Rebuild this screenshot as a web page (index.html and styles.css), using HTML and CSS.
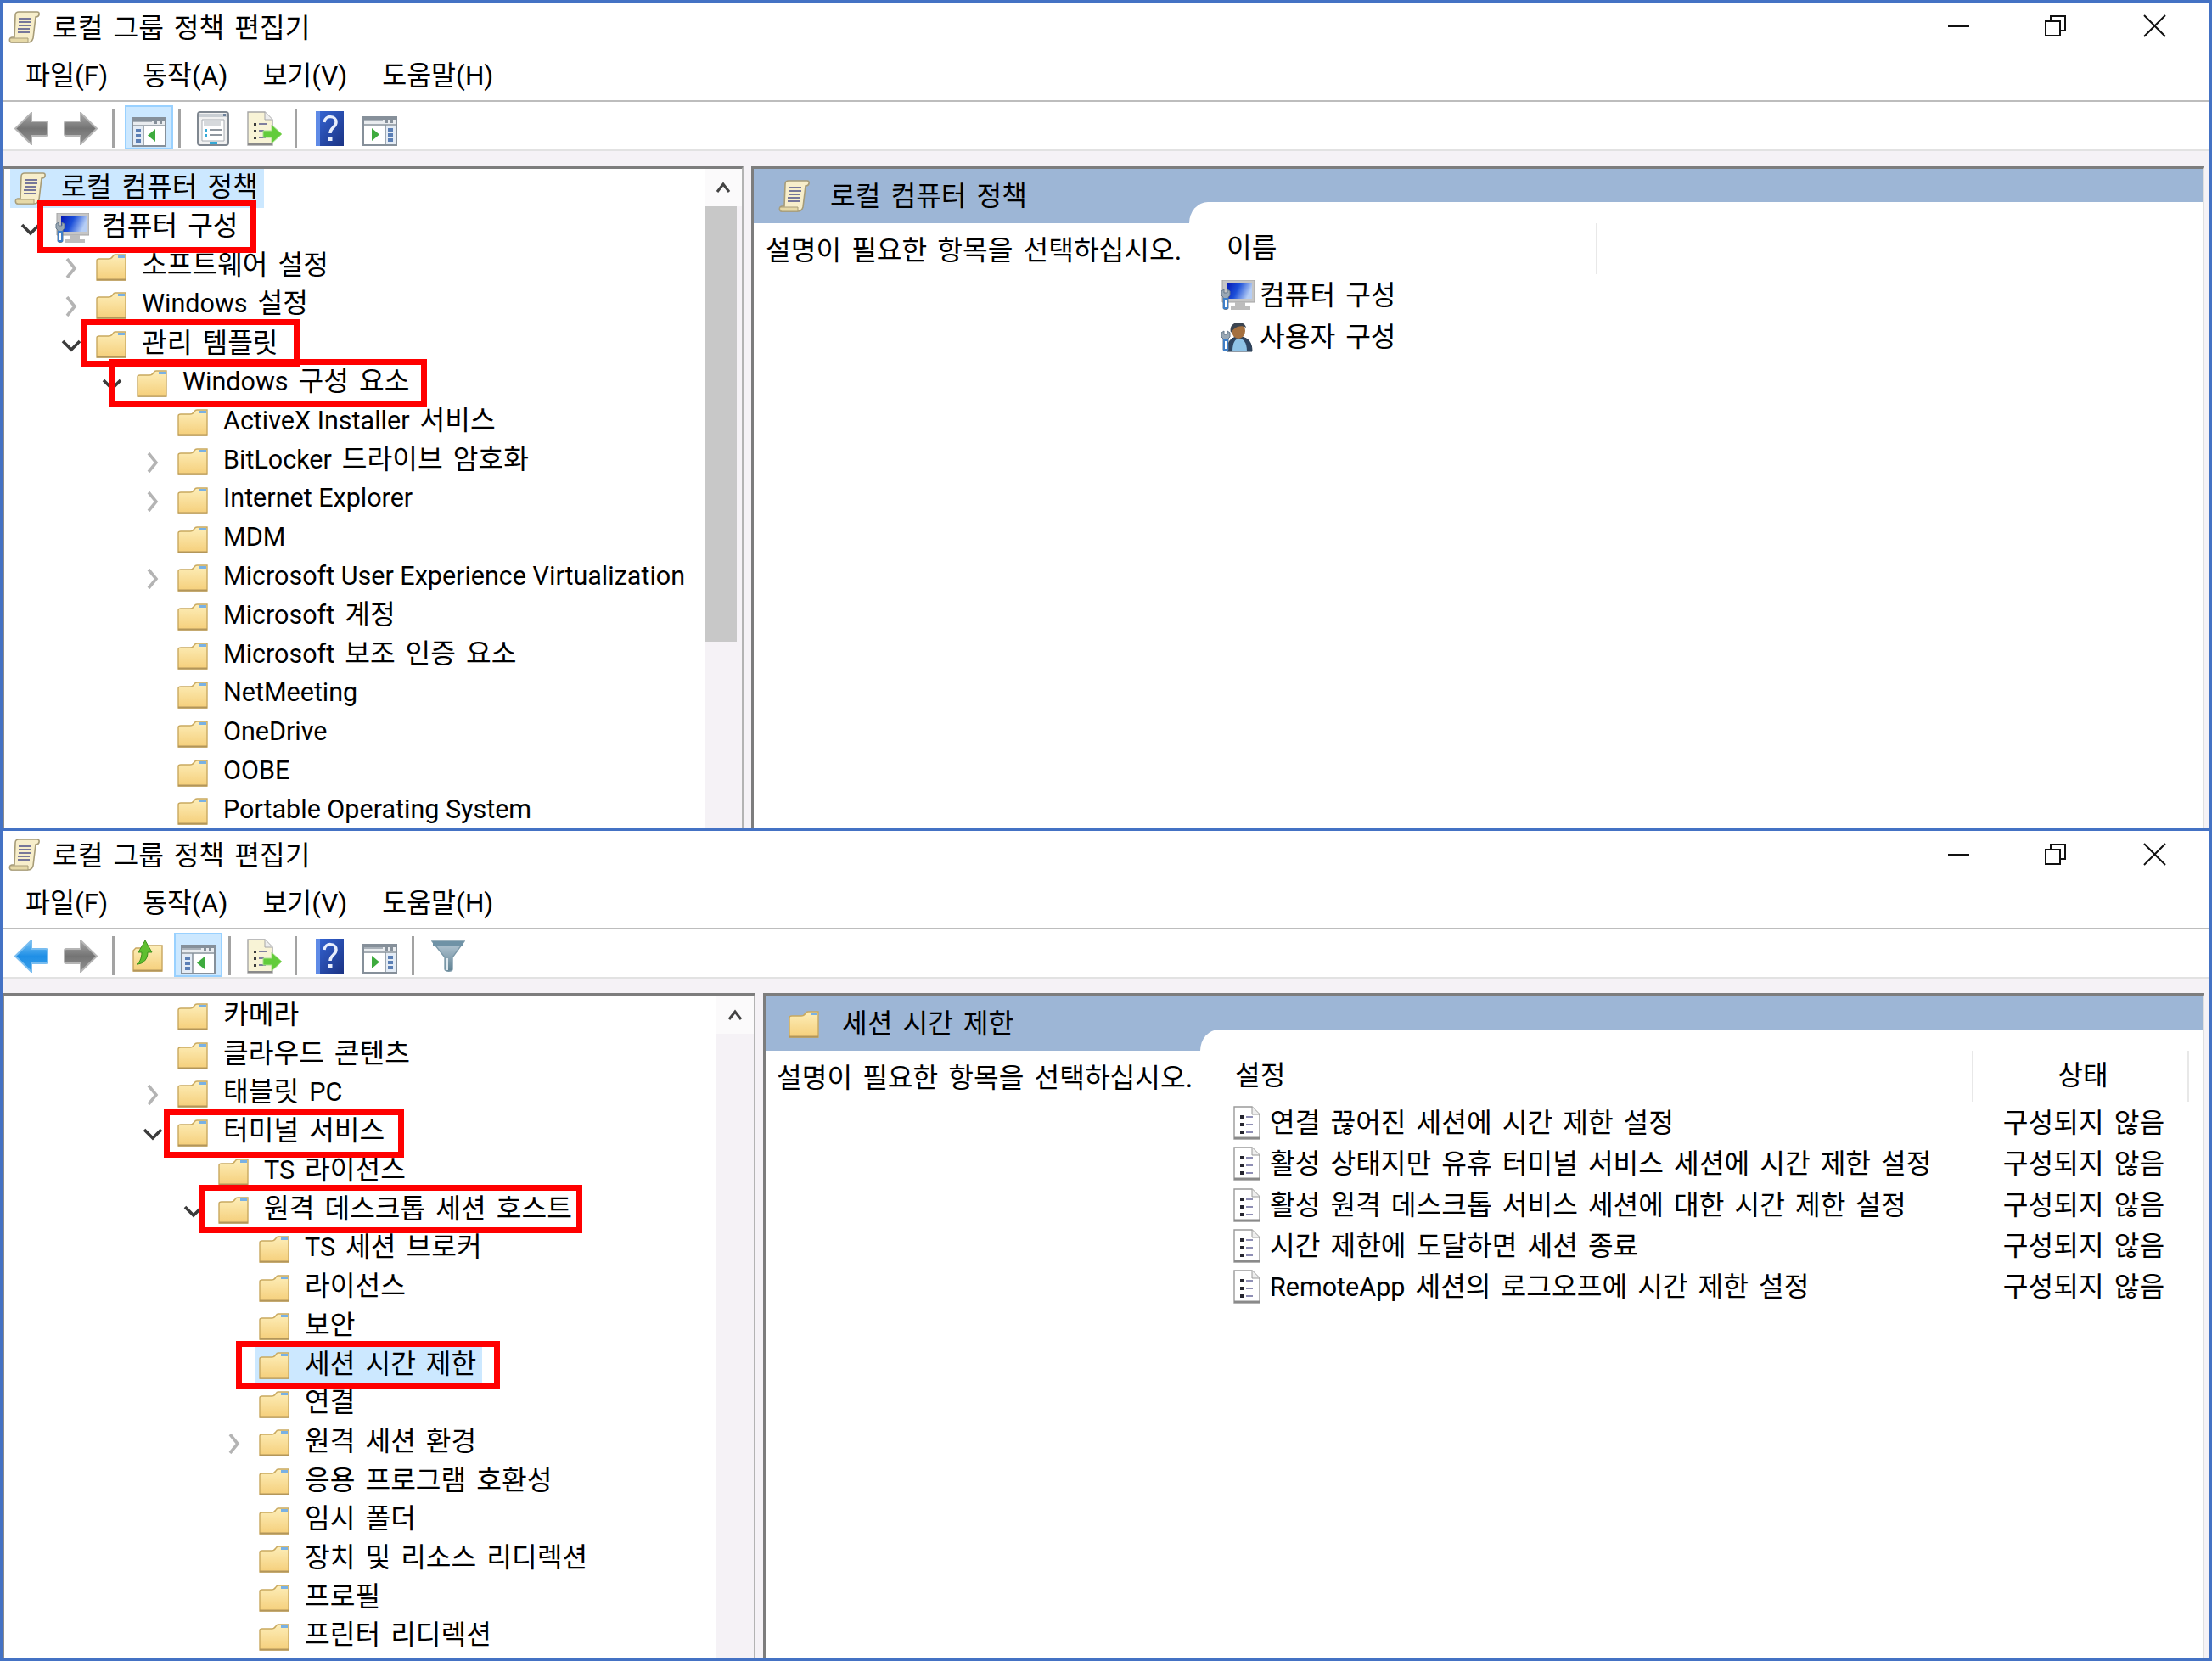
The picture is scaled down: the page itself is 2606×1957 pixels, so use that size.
FILE: index.html
```html
<!DOCTYPE html>
<html lang="ko">
<head><meta charset="utf-8"><title>로컬 그룹 정책 편집기</title><link rel="stylesheet" href="styles.css"></head>
<body>
<svg class="sprite" aria-hidden="true">
<defs>
<linearGradient id="gf" x1="0" y1="0" x2="0" y2="1"><stop offset="0" stop-color="#fdeeb9"/><stop offset="1" stop-color="#f5cf7b"/></linearGradient>
<linearGradient id="gs" x1="0" y1="0" x2="1" y2="0.300"><stop offset="0" stop-color="#0416b4"/><stop offset=".5" stop-color="#1c4fd8"/><stop offset="1" stop-color="#b5cdf5"/></linearGradient>
<linearGradient id="gh" x1="0" y1="0" x2="1" y2="1"><stop offset="0" stop-color="#3566d6"/><stop offset="1" stop-color="#1b3384"/></linearGradient>
<linearGradient id="gg" x1="0" y1="0" x2="0" y2="1"><stop offset="0" stop-color="#a8a8a8"/><stop offset=".5" stop-color="#747474"/><stop offset="1" stop-color="#939393"/></linearGradient>
<linearGradient id="gb" x1="0" y1="0" x2="0" y2="1"><stop offset="0" stop-color="#7cc5f5"/><stop offset=".5" stop-color="#1f8fe6"/><stop offset="1" stop-color="#3aa0ea"/></linearGradient>
<linearGradient id="gt" x1="0" y1="0" x2="0" y2="1"><stop offset="0" stop-color="#b9cbd8"/><stop offset="1" stop-color="#5f8192"/></linearGradient>
<symbol id="folder" viewBox="0 0 36 32"><path d="M1 31V8q0-2 3-2h11q3 0 5-3 1-2 3-2h12v30z" fill="url(#gf)" stroke="#c9a95f" stroke-width="1.400"/><path d="M1 29.500h34v2H1z" fill="#b3965a"/><path d="M26 2h8v3h-8z" fill="#79b1e4"/></symbol>
<symbol id="scroll" viewBox="0 0 37 38"><path d="M8 5c0-3 2-4 4-4h22c3 0 3 5-1 6h-1L29 32c-1 3-3 5-6 5H4c-3 0-4-5 0-6h3z" fill="#f7eecb" stroke="#a79c78" stroke-width="1.600"/><path d="M2 32h21v5H4c-2 0-3-3-2-5z" fill="#e6d9a8" stroke="#a79c78"/><path d="M12 9h15M12 13h15M12 17h14M11 21h14M11 25h14" stroke="#77779a" stroke-width="2"/></symbol>
<symbol id="computer" viewBox="0 0 40 36"><path d="M2 0h38v26H2z" fill="#c6c6c6" stroke="#a2a2a2"/><path d="M7 3h30v19H7z" fill="url(#gs)"/><path d="M17 26h12v5h6v4H12v-4h5z" fill="#bdbdbd"/><path d="M1 13l3-2v4h4v-4l3 2v5l-2 2v13c0 2-6 2-6 0V20l-2-2z" fill="#9aa8b4" stroke="#65798c"/><path d="M3 21h6v13H3z" fill="#3f7fc8"/><path d="M5 23h2v9H5z" fill="#fff"/></symbol>
<symbol id="user" viewBox="0 0 40 36"><path d="M8 35c0-13 5-17 14-17s15 5 15 17z" fill="#2f4560" stroke="#22364d"/><path d="M14 35c0-10 3-15 8-15s9 5 9 15z" fill="#8fc3e6"/><ellipse cx="21" cy="11" rx="8" ry="9" fill="#a4703f"/><path d="M12 13C10 4 16 1 21 1s8 2 9 6c-4-2-6-2-10-1-3 1-5 3-8 7z" fill="#3b4450"/><path d="M1 13l3-2v4h4v-4l3 2v5l-2 2v13c0 2-6 2-6 0V20l-2-2z" fill="#9aa8b4" stroke="#65798c"/><path d="M3 21h6v13H3z" fill="#3f7fc8"/><path d="M5 23h2v9H5z" fill="#fff"/></symbol>
<symbol id="doc" viewBox="0 0 33 40"><path d="M2 1h21l9 9v29H2z" fill="#fff" stroke="#9a9a9a" stroke-width="1.400"/><path d="M23 1v9h9" fill="#eee" stroke="#9a9a9a"/><path d="M2 36.500h30v2.500H2z" fill="#8a8a8a"/><path d="M9 11h4v4H9zM9 20h4v4H9zM9 29h4v4H9z" fill="#25252f"/><path d="M16 13h8M16 22h8M16 31h8" stroke="#8e8eb4" stroke-width="2.200"/></symbol>
<symbol id="chev-r" viewBox="0 0 24 24"><path d="M7 1l9 11-9 11" fill="none" stroke="#b4b4b4" stroke-width="3.600"/></symbol>
<symbol id="chev-d" viewBox="0 0 24 24"><path d="M2 7l10 10L22 7" fill="none" stroke="#3c3c3c" stroke-width="3.600"/></symbol>
<symbol id="back" viewBox="0 0 40 39"><path d="M1 19.500L20 1v10h17q2 0 2 2v13q0 2-2 2H20v10z" fill="url(#gg)" stroke="#b5b5b5" stroke-width="2"/></symbol>
<symbol id="back-on" viewBox="0 0 40 39"><path d="M1 19.500L20 1v10h17q2 0 2 2v13q0 2-2 2H20v10z" fill="url(#gb)" stroke="#79bdf0" stroke-width="2"/></symbol>
<symbol id="fwd" viewBox="0 0 40 39"><path d="M39 19.500L20 1v10H3q-2 0-2 2v13q0 2 2 2h17v10z" fill="url(#gg)" stroke="#b5b5b5" stroke-width="2"/></symbol>
<symbol id="pane-l" viewBox="0 0 41 35"><path d="M1 1h39v33H1z" fill="#fff" stroke="#86909a" stroke-width="2"/><path d="M1 1h39v3H1z" fill="#86909a"/><path d="M2 4h37v5H2z" fill="#e9ecef"/><path d="M2 4h22v2H2z" fill="#a9b1b9"/><path d="M27 4h3v4h-3zM33 4h3v4h-3z" fill="#86909a"/><path d="M1 10h39" stroke="#86909a" stroke-width="1.500"/><path d="M2 11h12v22H2z" fill="#e4ecf5"/><path d="M14 10v23" stroke="#86909a" stroke-width="1.500"/><path d="M5 14h6v4H5zM5 20h6v4H5zM5 26h6v4H5z" fill="#5b7fb5"/><path d="M28 14v15l-9-7.500z" fill="#3eab3e"/></symbol>
<symbol id="pane-r" viewBox="0 0 41 35"><path d="M1 1h39v33H1z" fill="#fff" stroke="#86909a" stroke-width="2"/><path d="M1 1h39v3H1z" fill="#86909a"/><path d="M2 4h37v5H2z" fill="#e9ecef"/><path d="M2 4h22v2H2z" fill="#a9b1b9"/><path d="M27 4h3v4h-3zM33 4h3v4h-3z" fill="#86909a"/><path d="M1 10h39" stroke="#86909a" stroke-width="1.500"/><path d="M27 11h12v22H27z" fill="#e4ecf5"/><path d="M27 10v23" stroke="#86909a" stroke-width="1.500"/><path d="M30 14h6v4h-6zM30 20h6v4h-6zM30 26h6v4h-6z" fill="#5b7fb5"/><path d="M11 14v15l9-7.500z" fill="#3eab3e"/></symbol>
<symbol id="props" viewBox="0 0 38 41"><rect x="1" y="1" width="36" height="39" rx="3" fill="#f1f1f1" stroke="#7f8790" stroke-width="2"/><path d="M3 3h32v4H3z" fill="#c9ced3"/><path d="M31 3h3v3h-3z" fill="#6a7f9a"/><path d="M6 10h26v25H6z" fill="#fff" stroke="#a8adb3"/><path d="M8 12h20v5H8z" fill="#d6d9dc"/><path d="M9 21h3v3H9zM9 27h3v3H9z" fill="#35a9d6"/><path d="M15 22h14M15 28h14" stroke="#8f979f" stroke-width="2"/><path d="M15 36h9v3h-9z" fill="#35a9d6"/></symbol>
<symbol id="export" viewBox="0 0 42 41"><path d="M1 1h20l9 9v30H1z" fill="#f8f3d6" stroke="#a6a6a6" stroke-width="1.400"/><path d="M21 1v9h9" fill="#eee" stroke="#a6a6a6"/><path d="M1 38h29v2H1z" fill="#8a8a8a"/><path d="M8 14h3v3H8zM8 22h3v3H8zM8 30h3v3H8z" fill="#3a3a3a"/><path d="M14 15h10M14 23h6M14 31h8" stroke="#7f7f9e" stroke-width="2"/><path d="M19 23h10v-7l12 11-12 11v-7H19z" fill="#62cc3a" stroke="#a8e08c"/></symbol>
<symbol id="help" viewBox="0 0 33 41"><path d="M0 0h33v41H0z" fill="url(#gh)"/><path d="M0 0h5v41H0z" fill="#5f8ae6"/><path d="M10 13c1-9 14-8 14 0 0 6-7 6-7 13" fill="none" stroke="#e8eefc" stroke-width="3.500"/><path d="M14.500 30h5v5h-5z" fill="#e8eefc"/></symbol>
<symbol id="up" viewBox="0 0 36 38"><path d="M1 37V13l3-3h12l4-3h15v30z" fill="url(#gf)" stroke="#c8a65f" stroke-width="1.400"/><path d="M1 35.500h34v2H1z" fill="#b3965a"/><path d="M5 29c3-1 6-7 6-14H7l8-14 8 14h-5c0 8-5 14-13 14z" fill="#5fbf2f" stroke="#3a8f1a"/></symbol>
<symbol id="filter" viewBox="0 0 40 37"><path d="M1 1h38L25 20v14c0 3-9 3-9 0V20z" fill="url(#gt)" stroke="#7b98a8" stroke-width="1.400"/><path d="M2 1h36v5H2z" fill="#6f92a6"/><path d="M17 21h3v14h-3z" fill="#dfe9ef"/></symbol>
</defs>
</svg>

<main class="page">
<section class="window w1">
  <header class="titlebar">
    <svg class="i-title"><use href="#scroll"/></svg><span class="title">로컬 그룹 정책 편집기</span>
    <div class="caption">
      <svg class="cap cap-min" viewBox="0 0 25 25"><path d="M0 13h25" stroke="#111" stroke-width="2"/></svg>
      <svg class="cap" viewBox="0 0 25 25"><path d="M1 7h17v17H1zM7 7V1h17v17h-6" fill="none" stroke="#111" stroke-width="2"/></svg>
      <svg class="cap" viewBox="0 0 25 25"><path d="M0 0l25 25M25 0L0 25" stroke="#111" stroke-width="2"/></svg>
    </div>
  </header>
  <nav class="menubar"><span>파일(F)</span><span>동작(A)</span><span>보기(V)</span><span>도움말(H)</span></nav>
  <div class="toolbar">
    <svg class="t-arrow"><use href="#back"/></svg>
    <svg class="t-arrow g18"><use href="#fwd"/></svg>
    <i class="sep g17"></i>
    <span class="pressed g12"><svg class="t-pane"><use href="#pane-l"/></svg></span>
    <i class="sep g6"></i>
    <svg class="t-props g19"><use href="#props"/></svg>
    <svg class="t-export g21"><use href="#export"/></svg>
    <i class="sep g14"></i>
    <svg class="t-help g22"><use href="#help"/></svg>
    <svg class="t-pane t-low g22"><use href="#pane-r"/></svg>
  </div>
  <div class="band"></div>
  <div class="panes">
    <aside class="tree-pane">
      <ul class="tree">
        <li class="row lroot"><span class="node sel"><svg class="ico i-scroll"><use href="#scroll"/></svg><span class="lab">로컬 컴퓨터 정책</span></span></li>
        <li class="row l0"><span class="tw"><svg class="chev"><use href="#chev-d"/></svg></span><span class="node"><svg class="ico i-comp"><use href="#computer"/></svg><span class="lab">컴퓨터 구성</span></span></li>
        <li class="row l1"><span class="tw"><svg class="chev"><use href="#chev-r"/></svg></span><span class="node"><svg class="ico"><use href="#folder"/></svg><span class="lab">소프트웨어 설정</span></span></li>
        <li class="row l1"><span class="tw"><svg class="chev"><use href="#chev-r"/></svg></span><span class="node"><svg class="ico"><use href="#folder"/></svg><span class="lab"><span class="lt">Windows</span> 설정</span></span></li>
        <li class="row l1"><span class="tw"><svg class="chev"><use href="#chev-d"/></svg></span><span class="node"><svg class="ico"><use href="#folder"/></svg><span class="lab">관리 템플릿</span></span></li>
        <li class="row l2"><span class="tw"><svg class="chev"><use href="#chev-d"/></svg></span><span class="node"><svg class="ico"><use href="#folder"/></svg><span class="lab"><span class="lt">Windows</span> 구성 요소</span></span></li>
        <li class="row l3"><span class="tw"></span><span class="node"><svg class="ico"><use href="#folder"/></svg><span class="lab"><span class="lt">ActiveX Installer</span> 서비스</span></span></li>
        <li class="row l3"><span class="tw"><svg class="chev"><use href="#chev-r"/></svg></span><span class="node"><svg class="ico"><use href="#folder"/></svg><span class="lab"><span class="lt">BitLocker</span> 드라이브 암호화</span></span></li>
        <li class="row l3"><span class="tw"><svg class="chev"><use href="#chev-r"/></svg></span><span class="node"><svg class="ico"><use href="#folder"/></svg><span class="lab lt">Internet Explorer</span></span></li>
        <li class="row l3"><span class="tw"></span><span class="node"><svg class="ico"><use href="#folder"/></svg><span class="lab lt">MDM</span></span></li>
        <li class="row l3"><span class="tw"><svg class="chev"><use href="#chev-r"/></svg></span><span class="node"><svg class="ico"><use href="#folder"/></svg><span class="lab lt">Microsoft User Experience Virtualization</span></span></li>
        <li class="row l3"><span class="tw"></span><span class="node"><svg class="ico"><use href="#folder"/></svg><span class="lab"><span class="lt">Microsoft</span> 계정</span></span></li>
        <li class="row l3"><span class="tw"></span><span class="node"><svg class="ico"><use href="#folder"/></svg><span class="lab"><span class="lt">Microsoft</span> 보조 인증 요소</span></span></li>
        <li class="row l3"><span class="tw"></span><span class="node"><svg class="ico"><use href="#folder"/></svg><span class="lab lt">NetMeeting</span></span></li>
        <li class="row l3"><span class="tw"></span><span class="node"><svg class="ico"><use href="#folder"/></svg><span class="lab lt">OneDrive</span></span></li>
        <li class="row l3"><span class="tw"></span><span class="node"><svg class="ico"><use href="#folder"/></svg><span class="lab lt">OOBE</span></span></li>
        <li class="row l3"><span class="tw"></span><span class="node"><svg class="ico"><use href="#folder"/></svg><span class="lab lt">Portable Operating System</span></span></li>
      </ul>
      <div class="scrollbar"><span class="sb-up"><svg class="sb-arrow" viewBox="0 0 18 14"><path d="M2 12l7-9 7 9" fill="none" stroke="#444" stroke-width="3"/></svg></span><span class="sb-thumb"></span></div>
    </aside>
    <article class="detail">
      <div class="d-head"><div class="d-title"><svg class="i-scroll"><use href="#scroll"/></svg><span>로컬 컴퓨터 정책</span></div><div class="d-notch"></div></div>
      <div class="d-body">
        <p class="d-desc">설명이 필요한 항목을 선택하십시오.</p>
        <div class="d-list">
          <div class="l-head"><span class="col-name">이름</span></div>
          <div class="l-row"><svg class="i-comp"><use href="#computer"/></svg><span>컴퓨터 구성</span></div>
          <div class="l-row"><svg class="i-comp"><use href="#user"/></svg><span>사용자 구성</span></div>
        </div>
      </div>
    </article>
  </div>
  <span class="mark m1"></span><span class="mark m2"></span><span class="mark m3"></span>
</section>

<section class="window w2">
  <header class="titlebar">
    <svg class="i-title"><use href="#scroll"/></svg><span class="title">로컬 그룹 정책 편집기</span>
    <div class="caption">
      <svg class="cap cap-min" viewBox="0 0 25 25"><path d="M0 13h25" stroke="#111" stroke-width="2"/></svg>
      <svg class="cap" viewBox="0 0 25 25"><path d="M1 7h17v17H1zM7 7V1h17v17h-6" fill="none" stroke="#111" stroke-width="2"/></svg>
      <svg class="cap" viewBox="0 0 25 25"><path d="M0 0l25 25M25 0L0 25" stroke="#111" stroke-width="2"/></svg>
    </div>
  </header>
  <nav class="menubar"><span>파일(F)</span><span>동작(A)</span><span>보기(V)</span><span>도움말(H)</span></nav>
  <div class="toolbar">
    <svg class="t-arrow"><use href="#back-on"/></svg>
    <svg class="t-arrow g18"><use href="#fwd"/></svg>
    <i class="sep g17"></i>
    <svg class="t-up g21"><use href="#up"/></svg>
    <span class="pressed g13"><svg class="t-pane"><use href="#pane-l"/></svg></span>
    <i class="sep g7"></i>
    <svg class="t-export g19"><use href="#export"/></svg>
    <i class="sep g14"></i>
    <svg class="t-help g22"><use href="#help"/></svg>
    <svg class="t-pane t-low g22"><use href="#pane-r"/></svg>
    <i class="sep g17"></i>
    <svg class="t-filter g20"><use href="#filter"/></svg>
  </div>
  <div class="band"></div>
  <div class="panes">
    <aside class="tree-pane">
      <ul class="tree">
        <li class="row l3"><span class="tw"></span><span class="node"><svg class="ico"><use href="#folder"/></svg><span class="lab">카메라</span></span></li>
        <li class="row l3"><span class="tw"></span><span class="node"><svg class="ico"><use href="#folder"/></svg><span class="lab">클라우드 콘텐츠</span></span></li>
        <li class="row l3"><span class="tw"><svg class="chev"><use href="#chev-r"/></svg></span><span class="node"><svg class="ico"><use href="#folder"/></svg><span class="lab">태블릿 <span class="lt">PC</span></span></span></li>
        <li class="row l3"><span class="tw"><svg class="chev"><use href="#chev-d"/></svg></span><span class="node"><svg class="ico"><use href="#folder"/></svg><span class="lab">터미널 서비스</span></span></li>
        <li class="row l4"><span class="tw"></span><span class="node"><svg class="ico"><use href="#folder"/></svg><span class="lab"><span class="lt">TS</span> 라이선스</span></span></li>
        <li class="row l4"><span class="tw"><svg class="chev"><use href="#chev-d"/></svg></span><span class="node"><svg class="ico"><use href="#folder"/></svg><span class="lab">원격 데스크톱 세션 호스트</span></span></li>
        <li class="row l5"><span class="tw"></span><span class="node"><svg class="ico"><use href="#folder"/></svg><span class="lab"><span class="lt">TS</span> 세션 브로커</span></span></li>
        <li class="row l5"><span class="tw"></span><span class="node"><svg class="ico"><use href="#folder"/></svg><span class="lab">라이선스</span></span></li>
        <li class="row l5"><span class="tw"></span><span class="node"><svg class="ico"><use href="#folder"/></svg><span class="lab">보안</span></span></li>
        <li class="row l5"><span class="tw"></span><span class="node sel"><svg class="ico"><use href="#folder"/></svg><span class="lab">세션 시간 제한</span></span></li>
        <li class="row l5"><span class="tw"></span><span class="node"><svg class="ico"><use href="#folder"/></svg><span class="lab">연결</span></span></li>
        <li class="row l5"><span class="tw"><svg class="chev"><use href="#chev-r"/></svg></span><span class="node"><svg class="ico"><use href="#folder"/></svg><span class="lab">원격 세션 환경</span></span></li>
        <li class="row l5"><span class="tw"></span><span class="node"><svg class="ico"><use href="#folder"/></svg><span class="lab">응용 프로그램 호환성</span></span></li>
        <li class="row l5"><span class="tw"></span><span class="node"><svg class="ico"><use href="#folder"/></svg><span class="lab">임시 폴더</span></span></li>
        <li class="row l5"><span class="tw"></span><span class="node"><svg class="ico"><use href="#folder"/></svg><span class="lab">장치 및 리소스 리디렉션</span></span></li>
        <li class="row l5"><span class="tw"></span><span class="node"><svg class="ico"><use href="#folder"/></svg><span class="lab">프로필</span></span></li>
        <li class="row l5"><span class="tw"></span><span class="node"><svg class="ico"><use href="#folder"/></svg><span class="lab">프린터 리디렉션</span></span></li>
      </ul>
      <div class="scrollbar"><span class="sb-up"><svg class="sb-arrow" viewBox="0 0 18 14"><path d="M2 12l7-9 7 9" fill="none" stroke="#444" stroke-width="3"/></svg></span></div>
    </aside>
    <article class="detail">
      <div class="d-head"><div class="d-title"><svg class="ico"><use href="#folder"/></svg><span>세션 시간 제한</span></div><div class="d-notch"></div></div>
      <div class="d-body">
        <p class="d-desc">설명이 필요한 항목을 선택하십시오.</p>
        <div class="d-list">
          <div class="l-head"><span class="col-name">설정</span><span class="col-state">상태</span></div>
          <div class="l-row"><span class="cell-name"><svg class="i-doc"><use href="#doc"/></svg><span>연결 끊어진 세션에 시간 제한 설정</span></span><span class="cell-state">구성되지 않음</span></div>
          <div class="l-row"><span class="cell-name"><svg class="i-doc"><use href="#doc"/></svg><span>활성 상태지만 유휴 터미널 서비스 세션에 시간 제한 설정</span></span><span class="cell-state">구성되지 않음</span></div>
          <div class="l-row"><span class="cell-name"><svg class="i-doc"><use href="#doc"/></svg><span>활성 원격 데스크톱 서비스 세션에 대한 시간 제한 설정</span></span><span class="cell-state">구성되지 않음</span></div>
          <div class="l-row"><span class="cell-name"><svg class="i-doc"><use href="#doc"/></svg><span>시간 제한에 도달하면 세션 종료</span></span><span class="cell-state">구성되지 않음</span></div>
          <div class="l-row"><span class="cell-name"><svg class="i-doc"><use href="#doc"/></svg><span><span class="lt">RemoteApp</span> 세션의 로그오프에 시간 제한 설정</span></span><span class="cell-state">구성되지 않음</span></div>
        </div>
      </div>
    </article>
  </div>
  <span class="mark m4"></span><span class="mark m5"></span><span class="mark m6"></span>
</section>
</main>
</body>
</html>
```

FILE: styles.css
```css
* { box-sizing: border-box; }
html, body { margin: 0; padding: 0; background: #fff; }
body {
  font-family: Roboto, "Noto Sans CJK KR", sans-serif;
  font-size: 32.3px;
  color: #000;
  word-spacing: 4px;
  line-height: 40px;
}
.lt { font-size: 30.5px; word-spacing: 0; }
.sprite { position: absolute; width: 0; height: 0; }
svg { display: block; flex: none; overflow: visible; }
ul { list-style: none; margin: 0; padding: 0; }
p { margin: 0; }

.page { width: 2606px; height: 1957px; overflow: hidden; display: flex; flex-direction: column; }

.window {
  position: relative;
  display: flex;
  flex-direction: column;
  border-style: solid;
  border-color: #4472c4;
  border-width: 3px 3px 0;
  background: #fff;
}
.w1 { height: 976px; }
.w2 { height: 981px; border-bottom-width: 4px; }

.titlebar { height: 57px; display: flex; align-items: center; padding-left: 7px; flex: none; }
.w2 .titlebar { height: 56px; }
.i-title { width: 37px; height: 38px; }
.title { margin-left: 15px; padding-top: 2px; }
.caption { margin-left: auto; display: flex; margin-right: 52px; gap: 92px; align-items: center; margin-bottom: 2px; }
.cap { width: 25px; height: 25px; }
.cap-min { margin-right: -3px; }

.menubar {
  height: 60px;
  flex: none;
  display: flex;
  align-items: center;
  gap: 41px;
  padding: 2px 0 0 27px;
  border-bottom: 2px solid #bdbdbd;
  word-spacing: 0;
  font-size: 31.5px;
}

.toolbar {
  height: 58px;
  flex: none;
  display: flex;
  align-items: center;
  padding: 6px 0 0 14px;
  border-bottom: 2px solid #e2e2e2;
}
.sep { width: 3px; height: 46px; background: #a3a3a3; flex: none; }
.g6 { margin-left: 6px; } .g7 { margin-left: 7px; } .g12 { margin-left: 12px; } .g13 { margin-left: 13px; }
.g14 { margin-left: 14px; } .g17 { margin-left: 17px; } .g18 { margin-left: 18px; } .g19 { margin-left: 19px; }
.g20 { margin-left: 20px; } .g21 { margin-left: 21px; } .g22 { margin-left: 22px; }
.t-arrow { width: 40px; height: 39px; }
.pressed { width: 57px; height: 52px; margin-top: -3px; background: #cce8ff; border: 2px solid #99d1ff; display: flex; align-items: center; justify-content: center; padding-top: 11px; flex: none; }
.t-pane { width: 41px; height: 35px; }
.t-low { margin-top: 7px; }
.t-props, .t-export { height: 41px; }
.t-props { width: 38px; }
.t-export { width: 42px; }
.t-help { width: 33px; height: 41px; }
.t-up { width: 36px; height: 38px; }
.t-filter { width: 40px; height: 37px; }

.band { height: 17px; flex: none; background: #f5f2f6; }

.panes { flex: 1; min-height: 0; display: flex; background: #f5f2f6; padding-right: 6px; }
.tree-pane {
  flex: none;
  display: flex;
  background: #fff;
  border-top: 4px solid #7d7d7d;
  border-left: 2px solid #8c8c8c;
  border-right: 2px solid #b3b3b3;
  overflow: hidden;
}
.w1 .tree-pane { width: 873px; }
.w2 .tree-pane { width: 887px; }
.tree { flex: 1; min-width: 0; }
.row { height: 45.85px; display: flex; align-items: center; white-space: nowrap; }
.w2 .row { height: 45.7px; }
.lroot { padding-left: 7px; }
.l0 { padding-left: 19px; } .l1 { padding-left: 67px; } .l2 { padding-left: 115px; }
.l3 { padding-left: 163px; } .l4 { padding-left: 211px; } .l5 { padding-left: 259px; }
.tw { width: 36px; flex: none; }
.chev { width: 24px; height: 24px; margin-top: 4px; }
.node { display: flex; align-items: center; height: 100%; padding: 0 7px 0 5px; }
.sel { background: #cce8ff; }
.ico { width: 36px; height: 32px; margin-right: 18px; margin-top: 2px; }
.i-scroll { width: 37px; height: 38px; }
.ico.i-scroll { margin-right: 18px; margin-top: 0; }
.ico.i-comp { width: 40px; height: 36px; margin-right: 15px; }
.lab { position: relative; top: -1.500px; }

.scrollbar { width: 44px; flex: none; background: #f5f2f6; display: flex; flex-direction: column; }
.sb-up { height: 44px; flex: none; background: #fbfafb; display: flex; align-items: center; justify-content: center; }
.sb-arrow { width: 18px; height: 14px; }
.sb-thumb { height: 513px; width: 38px; background: #c8c8c8; flex: none; }

.detail {
  flex: 1;
  min-width: 0;
  margin-left: 9px;
  background: #fff;
  border-top: 4px solid #7d7d7d;
  border-left: 3px solid #7d7d7d;
  border-right: 2px solid #dfdfdf;
  display: flex;
  flex-direction: column;
  overflow: hidden;
}
.d-head { height: 64px; flex: none; display: flex; background: #9db6d6; }
.d-title { display: flex; align-items: center; padding-left: 29px; gap: 24px; height: 64px; flex: none; }
.w1 .d-title { width: 513px; }
.w2 .d-title { width: 512px; padding-left: 27px; gap: 9px; }
.w2 .d-title .ico { margin-right: 18px; }
.d-notch { flex: 1; margin-top: 39px; background: #fff; border-top-left-radius: 22px 25px; }
.d-body { flex: 1; display: flex; }
.d-desc { flex: none; padding: 12px 0 0 13px; white-space: nowrap; }
.w1 .d-desc { width: 513px; padding-left: 14px; }
.w2 .d-desc { width: 512px; }
.d-list { flex: 1; min-width: 0; }
.l-head { display: flex; height: 60px; align-items: center; }
.col-name { border-right: 2px solid #e8e8e8; height: 60px; line-height: 58px; flex: none; }
.w1 .col-name { width: 481px; padding-left: 44px; }
.w2 .col-name { width: 911px; padding-left: 41px; }
.col-state { width: 254px; height: 60px; line-height: 58px; text-align: center; border-right: 2px solid #e8e8e8; padding-left: 6px; }
.l-row { display: flex; align-items: center; white-space: nowrap; }
.w1 .l-row { height: 49px; padding-left: 37px; gap: 6px; }
.w2 .l-row { height: 48.300px; padding-top: 2px; }
.cell-name { width: 911px; display: flex; align-items: center; gap: 11px; padding-left: 38px; flex: none; }
.cell-state { width: 254px; text-align: center; flex: none; padding-left: 6px; }
.i-comp { width: 40px; height: 36px; }
.i-doc { width: 33px; height: 40px; }

.mark { position: absolute; border: 7px solid #f00; pointer-events: none; }
.m1 { left: 41px; top: 233px; width: 258px; height: 62px; }
.m2 { left: 92px; top: 373px; width: 258px; height: 56px; }
.m3 { left: 126px; top: 420px; width: 374px; height: 57px; }
.m4 { left: 190px; top: 328px; width: 283px; height: 57px; }
.m5 { left: 231px; top: 417px; width: 452px; height: 57px; }
.m6 { left: 275px; top: 601px; width: 311px; height: 57px; }
```
